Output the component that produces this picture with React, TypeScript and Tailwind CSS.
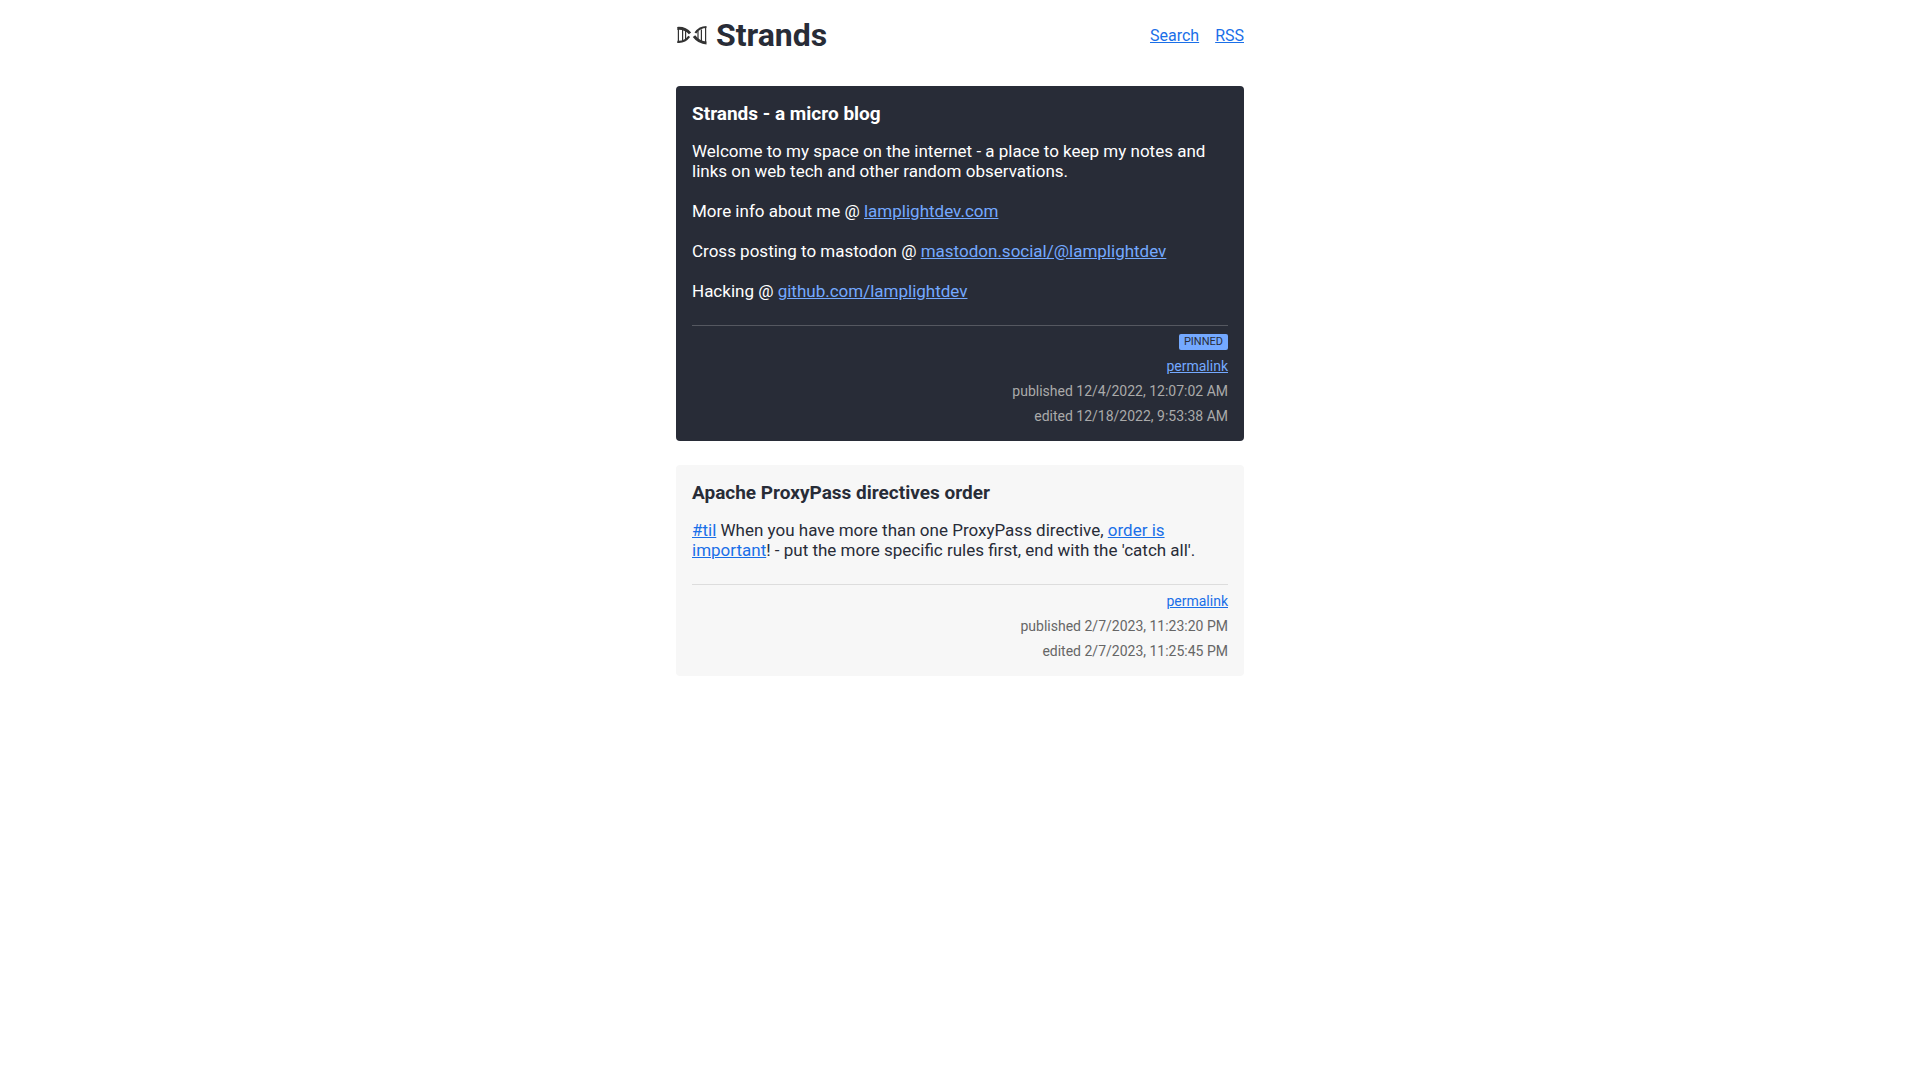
import type { ReactNode } from 'react'

type PostProps = {
    title: string
    published: string
    edited: string
    pinned?: boolean
    children: ReactNode
}

function Logo() {
    return (
        <svg className="w-8 h-5 text-[#333333]" viewBox="0 0 32 20" fill="none" stroke="currentColor" aria-hidden="true">
            <path d="M1.3 3.4C6.5 3 11 4.8 14 8.4" strokeWidth="3" />
            <path d="M1.3 16.8C6.5 17.4 10.4 15.2 13.2 11.4" strokeWidth="2.2" />
            <path d="M19.4 8C22 4.2 25.4 2 30.5 2" strokeWidth="2.2" />
            <path d="M18 11.2C21 15.2 25 17.9 30.5 17.9" strokeWidth="3" />
            <path d="M2.4 4V16.5M6.6 5V16M9.6 6V14.5M22 6V14M25.4 4.5V16M29.6 2.5V17.5" strokeWidth="1.2" />
        </svg>
    )
}

function Post({ title, published, edited, pinned = false, children }: PostProps) {
    const link = pinned ? 'text-[#74a9ff] underline' : 'text-[#1a6fe8] underline'

    return (
        <article className={pinned ? 'rounded p-4 bg-[#282c37] text-white' : 'rounded p-4 bg-[#f7f7f7] text-[#282c37]'}>
            <h2 className="mb-4 text-[19px] leading-[23px] font-bold">{title}</h2>
            <div className={pinned ? 'flex flex-col gap-5 text-[17px] leading-5 [&_a]:text-[#74a9ff] [&_a]:underline' : 'text-[17px] leading-5 [&_a]:text-[#1a6fe8] [&_a]:underline'}>
                {children}
            </div>
            <footer
                className={
                    pinned
                        ? 'mt-6 pt-2 flex flex-col items-end gap-2 border-t border-[#555860] text-sm leading-[17px] text-[#aaaaaa]'
                        : 'mt-6 pt-2 flex flex-col items-end gap-2 border-t border-[#dddddd] text-sm leading-[17px] text-[#666666]'
                }
            >
                {pinned && (
                    <span className="rounded-xs px-[5px] bg-[#74a9ff] text-[11px] leading-4 uppercase text-[#282c37]">Pinned</span>
                )}
                <a href="#permalink" className={link}>permalink</a>
                <span>published {published}</span>
                <span>edited {edited}</span>
            </footer>
        </article>
    )
}

export default function App() {
    return (
        <div className="mx-auto max-w-[600px] p-4 font-['Roboto',sans-serif] text-[#282c37]">
            <header className="mb-8 flex items-center justify-between">
                <div className="flex items-center gap-2">
                    <Logo />
                    <h1 className="text-[32px] leading-[38px] font-bold">Strands</h1>
                </div>
                <nav className="flex gap-4 leading-[19px] text-[#1a6fe8]">
                    <a href="#search" className="underline">Search</a>
                    <a href="#rss" className="underline">RSS</a>
                </nav>
            </header>
            <main className="flex flex-col gap-6">
                <Post title="Strands - a micro blog" published="12/4/2022, 12:07:02 AM" edited="12/18/2022, 9:53:38 AM" pinned>
                    <p>
                        Welcome to my space on the internet - a place to keep my notes and links on web tech and other
                        random observations.
                    </p>
                    <p>More info about me @ <a href="#site">lamplightdev.com</a></p>
                    <p>Cross posting to mastodon @ <a href="#mastodon">mastodon.social/@lamplightdev</a></p>
                    <p>Hacking @ <a href="#github">github.com/lamplightdev</a></p>
                </Post>
                <Post title="Apache ProxyPass directives order" published="2/7/2023, 11:23:20 PM" edited="2/7/2023, 11:25:45 PM">
                    <p>
                        <a href="#til">#til</a> When you have more than one ProxyPass directive,{' '}
                        <a href="#order">order is important</a>! - put the more specific rules first, end with the
                        'catch all'.
                    </p>
                </Post>
            </main>
        </div>
    )
}
